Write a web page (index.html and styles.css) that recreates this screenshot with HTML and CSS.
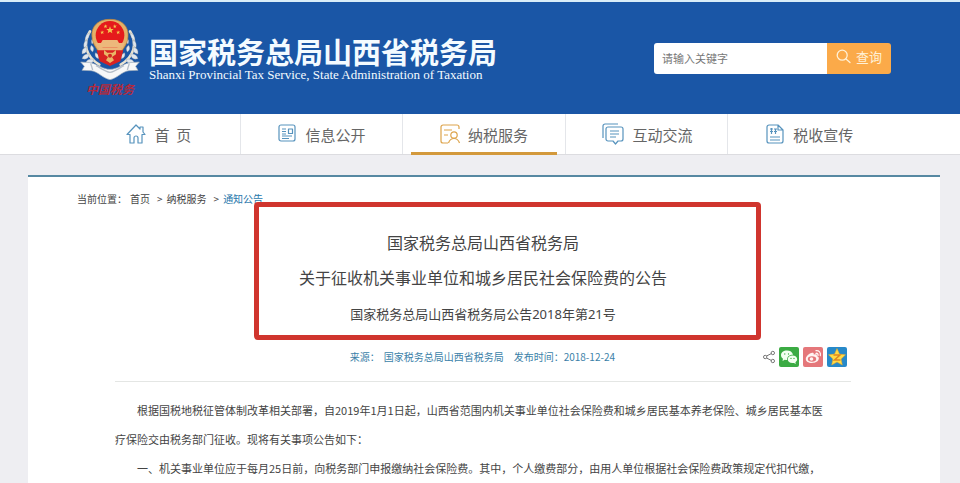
FILE: index.html
```html
<!DOCTYPE html>
<html lang="zh-CN">
<head>
<meta charset="utf-8">
<title>国家税务总局山西省税务局</title>
<link rel="stylesheet" href="styles.css">
</head>
<body>
<header class="banner">
  <div class="brand">
    <div class="emblem">
      <svg width="60" height="62" viewBox="0 0 180 186" aria-hidden="true">
        <g fill="none" stroke="#e9e3d2" stroke-width="8" stroke-linecap="round">
          <path d="M30 40C6 76 18 116 58 140M150 40c24 36 12 76-28 100"/>
        </g>
        <g fill="#dfe6ee" stroke="#8a8f92" stroke-width="1">
          <path d="M28 44q-14 8-12 24 14-8 12-24zM20 66q-12 8-8 24 14-8 8-24zM20 88q-16 2-14 20 18-2 14-20zM28 108q-18-2-22 14 20 6 22-14zM42 124q-20-4-26 12 22 6 26-12zM42 58q6 12-6 20-6-12 6-20zM34 82q12 8 4 20-12-8-4-20zM46 104q14 4 10 18-14-4-10-18z"/>
          <path d="M152 44q14 8 12 24-14-8-12-24zM160 66q12 8 8 24-14-8-8-24zM160 88q16 2 14 20-18-2-14-20zM152 108q18-2 22 14-20 6-22-14zM138 124q20-4 26 12-22 6-26-12zM138 58q-6 12 6 20 6-12-6-20zM146 82q-12 8-4 20 12-8 4-20zM134 104q-14 4-10 18 14-4 10-18z"/>
        </g>
        <path fill="#e4b168" stroke="#b47c3b" stroke-width="2" d="M90 4C58 3 32 23 36 57c2 26 18 36 24 55h60c6-19 22-29 24-55 4-34-22-54-54-53z"/>
        <circle cx="90" cy="52" r="43" fill="#e51a1c"/>
        <path fill="#f5c64f" d="M90 25l3 8h8l-6 5 2 8-7-5-7 5 2-8-6-5h8zM66 37l2 4 4-1-3 4 2 4-4-2-4 3 1-5-3-3h4zM114 37l2 4 4-1-3 4 2 4-4-2-4 3 1-5-3-3h4zM76 19l2 4 4-1-3 4 2 4-4-2-4 3 1-5-3-3h4zM104 19l2 4 4-1-3 4 2 4-4-2-4 3 1-5-3-3h4z"/>
        <path fill="#edb87b" d="M68 66h44l5 9h17l-6 14H52l-6-14h17zM56 90h68v7H56z"/>
        <path fill="#d82222" d="M50 97h80l-9 33-31 14-31-14z"/>
        <path fill="#e9b767" d="M72 96l10 8h16l10-8v13l-12 8 6 10-12 8-12-8 6-10-12-8z"/>
        <circle cx="90" cy="113" r="6" fill="#cf2721"/>
        <path fill="#f6f7f8" stroke="#9caab9" stroke-width="2" d="M2 132l30 2c18 4 38 20 58 20s40-16 58-20l30-2-11 13 7 12-27 1c-22 3-34 22-57 27-23-5-35-24-57-27l-27-1 7-12z"/>
        <path fill="none" stroke="#b5bec8" stroke-width="4" d="M32 136l6 20M148 136l-6 20M48 143c16 8 27 18 42 20 15-2 26-12 42-20"/>
      </svg>
      <span class="emblem-name">中国税务</span>
    </div>
    <div class="brand-text">
      <div class="brand-cn">国家税务总局山西省税务局</div>
      <div class="brand-en">Shanxi Provincial Tax Service, State Administration of Taxation</div>
    </div>
  </div>
  <form class="search">
    <input type="text" placeholder="请输入关键字" aria-label="请输入关键字">
    <button type="button">
      <svg width="15" height="15" viewBox="0 0 15 15" fill="none" stroke="currentColor" stroke-width="1.3" stroke-linecap="round" aria-hidden="true"><circle cx="6.2" cy="6.2" r="5"/><path d="M10 10l4 3.500"/></svg>
      查询
    </button>
  </form>
</header>

<nav class="nav">
  <a href="#">
    <svg width="20" height="20" viewBox="0 0 20 20" aria-hidden="true"><path d="M1 10.500L10 1l4 4V3h3v5l2 2.500h-3V19h-4v-5a2 2 0 0 0-4 0v5H4v-8.500z"/></svg>
    首&nbsp; 页</a>
  <a href="#">
    <svg width="20" height="20" viewBox="0 0 20 20" aria-hidden="true"><rect x="2" y="1" width="16" height="16" rx="2"/><path d="M5 5h4M5 7.500h4M5 10h4M5 12h10M5 14.500h7M11.500 5h4v4.500h-4z"/></svg>
    信息公开</a>
  <a href="#" class="current">
    <svg width="20" height="20" viewBox="0 0 20 20" aria-hidden="true"><path d="M19 5V3a2 2 0 0 0-2-2H3a2 2 0 0 0-2 2v14a2 2 0 0 0 2 2h5M4 6h8M4 11h4"/><circle cx="14" cy="11" r="3.200"/><path d="M8.500 19c1-3 3-4.500 5.500-4.500s4.500 1.500 5.500 4.500"/></svg>
    纳税服务</a>
  <a href="#">
    <svg width="24" height="22" viewBox="0 0 24 22" aria-hidden="true"><path d="M2 15V3a2 2 0 0 1 2-2h13M7 4h13a2 2 0 0 1 2 2v10a2 2 0 0 1-2 2h-3l-2.500 3-2.500-3H7a2 2 0 0 1-2-2V6a2 2 0 0 1 2-2zM9 8h9M9 11h9M9 14h6"/></svg>
    互动交流</a>
  <a href="#">
    <svg width="19" height="20" viewBox="0 0 19 20" aria-hidden="true"><path d="M12 1H3a2 2 0 0 0-2 2v14a2 2 0 0 0 2 2h12a2 2 0 0 0 2-2V6zM12 1v5h5M4 13h10M4 16h10M4 5h3M4 7.500h3M5.500 4v6M8 5h3M8 7.500h3M9.500 5v5"/></svg>
    税收宣传</a>
</nav>

<main class="panel">
  <div class="crumbs">
    <span>当前位置：</span><a href="#">首页</a><span class="sep">&gt;</span><a href="#">纳税服务</a><span class="sep">&gt;</span><a href="#" class="here">通知公告</a>
  </div>
  <article>
    <div class="heading">
      <h1>国家税务总局山西省税务局</h1>
      <h1>关于征收机关事业单位和城乡居民社会保险费的公告</h1>
      <h2>国家税务总局山西省税务局公告2018年第21号</h2>
    </div>
    <div class="meta">
      <div class="source"><span>来源：</span><span>国家税务总局山西省税务局</span><span class="date">发布时间：2018-12-24</span></div>
      <div class="share">
        <svg width="12" height="14" viewBox="0 0 12 14" fill="none" stroke="#777" aria-hidden="true"><path d="M3.500 6l5-2.500M3.500 8l5 2.500"/><circle cx="2.200" cy="7" r="1.700"/><circle cx="9.800" cy="3" r="1.700"/><circle cx="9.800" cy="11" r="1.700"/></svg>
        <a href="#" aria-label="微信"><svg width="20" height="20" viewBox="0 0 20 20"><rect width="20" height="20" rx="2" fill="#3bab43"/><path fill="#f3fff0" d="M8 3.500c-3.500 0-6 2-6 4.700 0 1.500.8 2.700 2 3.600L3.500 14l2.300-1.300c.7.2 1.500.3 2.200.3 0-3.500 2.500-5.300 6-5.300C13.500 5 11 3.500 8 3.500z"/><path fill="#f3fff0" d="M13.500 8.500c-2.800 0-4.800 1.600-4.800 3.800s2 3.800 4.800 3.800l1.500-.2 1.800 1-.4-1.700c1.200-.8 1.800-1.700 1.800-2.900 0-2.200-2-3.800-4.700-3.800z"/><path stroke="#3bab43" stroke-width="1.300" stroke-linecap="round" d="M5.800 7v.1M9.500 7v.1M12 11.300v.1M15 11.300v.1"/></svg></a>
        <a href="#" aria-label="微博"><svg width="20" height="20" viewBox="0 0 20 20"><rect width="20" height="20" rx="2" fill="#e5777a"/><path fill="#fff4f2" d="M8.500 6c1.500-.5 2.500 0 2.300 1.700 2-.8 3.700-.2 3 1.400 1.500.5 2.200 1.500 2 2.700-.3 2.400-3.300 4.200-7 4.200-3.500 0-6-1.600-6-4C2.800 9.500 5.800 6.600 8.500 6z"/><ellipse cx="9" cy="12" rx="4.200" ry="2.800" fill="#e5777a"/><circle cx="8.500" cy="12" r="1.800" fill="#fff4f2"/><path fill="none" stroke="#fff4f2" stroke-width="1.300" stroke-linecap="round" d="M13 6.300c1.400-.2 2.200.7 2 2M13 3.700c3-.4 5 2 4.300 4.800"/></svg></a>
        <a href="#" aria-label="QQ空间"><svg width="20" height="20" viewBox="0 0 20 20"><rect width="20" height="20" rx="2" fill="#2789c9"/><path fill="#ffdc45" stroke="#e9a528" stroke-width=".5" d="M10 1.500l2.500 5.600 6 .7-4.400 4.200 1.200 6-5.300-3-5.300 3 1.200-6L1.500 7.800l6-.7z"/><path fill="none" stroke="#df8620" stroke-width="1.500" d="M6.500 8h6.500l-5.500 5h6"/></svg></a>
      </div>
    </div>
    <div class="body">
      <p>根据国税地税征管体制改革相关部署，自2019年1月1日起，山西省范围内机关事业单位社会保险费和城乡居民基本养老保险、城乡居民基本医<br>疗保险交由税务部门征收。现将有关事项公告如下：</p>
      <p>一、机关事业单位应于每月25日前，向税务部门申报缴纳社会保险费。其中，个人缴费部分，由用人单位根据社会保险费政策规定代扣代缴，</p>
    </div>
  </article>
</main>
</body>
</html>
```
FILE: styles.css
```css
* { box-sizing: border-box; }

body {
  margin: 0;
  background: #eeeef2;
  color: #444;
  font-family: "Noto Sans CJK SC", sans-serif;
  font-size: 11px;
}

a { color: inherit; text-decoration: none; }

.banner {
  display: flex;
  align-items: center;
  justify-content: space-between;
  height: 114px;
  padding: 0 69px 0 80px;
  border-top: 2px solid #d9edf8;
  background: #1a56a6;
}

.brand { display: flex; align-items: center; gap: 9px; color: #f4fbff; }
.emblem { display: flex; flex-direction: column; align-items: center; width: 60px; }
.emblem svg { display: block; }
.emblem-name {
  color: #b22a3c;
  font: italic bold 12px/18px "Noto Sans CJK SC", sans-serif;
}
.brand-text { display: grid; gap: 1px; }
.brand-cn { font-size: 29px; font-weight: 700; line-height: 32px; white-space: nowrap; }
.brand-en { font: 13px/14px "Liberation Serif", serif; white-space: nowrap; }

.search { display: flex; width: 237px; height: 31px; border-radius: 3px; overflow: hidden; }
.search input {
  flex: 1;
  min-width: 0;
  padding: 0 8px;
  border: 0;
  background: #fff;
  font: 11px "Noto Sans CJK SC", sans-serif;
}
.search input::placeholder { color: #777; }
.search button {
  display: flex;
  align-items: center;
  justify-content: center;
  gap: 5px;
  width: 64px;
  padding: 0 0 4px;
  border: 0;
  background: #fbaa49;
  color: #fff1d6;
  font: 13px "Noto Sans CJK SC", sans-serif;
}

.nav {
  display: grid;
  grid-template-columns: repeat(5, 1fr);
  height: 41px;
  padding: 0 69px 0 78px;
  border-bottom: 1px solid #dcdce0;
  background: #fff;
}
.nav a {
  position: relative;
  display: flex;
  align-items: center;
  justify-content: center;
  gap: 8px;
  border-right: 1px solid #e4e6ea;
  color: #666;
  font-size: 15px;
}
.nav a:last-child { border-right: 0; }
.nav svg { fill: none; stroke: #5793bd; stroke-width: 1.2; stroke-linejoin: round; }
.nav .current svg { stroke: #dda34a; }
.nav .current::after {
  content: "";
  position: absolute;
  right: 8px;
  bottom: -1px;
  left: 8px;
  height: 3px;
  background: #d3993c;
}

.panel {
  margin: 20px 20px 0 28px;
  border-top: 2px solid #5688a2;
  background: #fff;
}

.crumbs {
  display: flex;
  padding: 14px 49px 0;
  font-size: 10px;
  line-height: 16px;
}
.crumbs span:first-child { margin-right: 3px; }
.crumbs .sep { padding: 0 4px 0 7px; }
.crumbs .here { color: #2878ac; }

article { padding: 0 89px 0 87px; }

.heading {
  position: relative;
  padding-top: 19px;
  font-family: "Noto Sans", "Noto Sans CJK SC", sans-serif;
  text-align: center;
}
.heading::after {
  content: "";
  position: absolute;
  top: -5px;
  right: 90px;
  bottom: -8px;
  left: 139px;
  border: 5px solid #d0352e;
  border-radius: 4px;
}
.heading h1 { margin: 0; font-size: 16px; font-weight: 400; line-height: 35px; }
.heading h2 { margin: 0; font-size: 13px; font-weight: 400; line-height: 36px; }

.meta {
  display: flex;
  align-items: center;
  justify-content: flex-end;
  height: 50px;
  border-bottom: 1px solid #e4e6e4;
  color: #3b7fa8;
  font-size: 10px;
}
.source { display: flex; flex: 1; justify-content: flex-end; margin-right: 148px; gap: 4px; }
.source .date { margin-left: 6px; }
.share { display: flex; align-items: center; gap: 4px; margin-right: 4px; }
.share svg { display: block; }

.body { padding-top: 14px; }
.body p { margin: 0; line-height: 29px; text-indent: 22px; white-space: nowrap; }
```
